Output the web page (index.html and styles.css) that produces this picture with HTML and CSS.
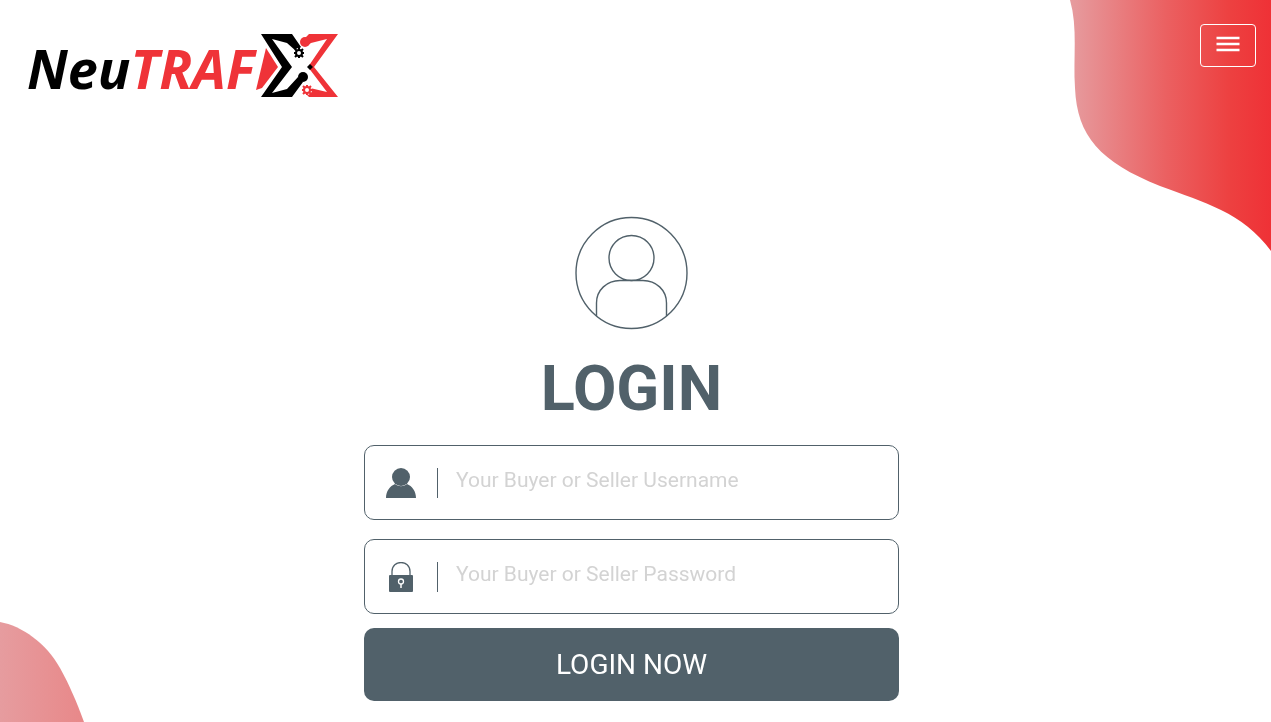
FILE: index.html
```
<!DOCTYPE html>
<html lang="en">
<head>
    <meta charset="UTF-8">
    <title>NeuTRAFIX - Login</title>
    <meta name="viewport" content="width=device-width, initial-scale=1.0">
    <link rel="stylesheet" href="styles.css">
</head>
<body>
    <!-- Background shapes -->
    <svg class="shape shape-top" width="201" height="251" viewBox="0 0 201 251" aria-hidden="true">
        <defs>
            <linearGradient id="redTop">
                <stop offset="0" stop-color="#e69c9f"/>
                <stop offset="0.48" stop-color="#eb6061"/>
                <stop offset="0.8" stop-color="#ed4040"/>
                <stop offset="1" stop-color="#ef3136"/>
            </linearGradient>
        </defs>
        <path fill="url(#redTop)" d="M0 0C8 28 3 58 5 88C7 136 30 162 90 186C135 203 172 212 201 251V0Z"/>
    </svg>
    <svg class="shape shape-bottom" width="85" height="101" viewBox="0 0 85 101" aria-hidden="true">
        <defs>
            <linearGradient id="redBottom">
                <stop offset="0" stop-color="#e69c9f"/>
                <stop offset="1" stop-color="#e88889"/>
            </linearGradient>
        </defs>
        <path fill="url(#redBottom)" d="M0 1C22 5 46 22 60 47C70 65 77 82 84 101H0Z"/>
    </svg>

    <!-- Header -->
    <header class="header">
        <a href="#" class="logo" aria-label="NeuTRAFIX">
            <svg width="312" height="64" viewBox="0 0 312 64">
                <text class="logo-text" x="0" y="55">Neu<tspan class="logo-red">TRAF</tspan></text>
                <path class="logo-red" d="M239 14L251 33L235 54L229 56Z"/>
                <path d="M234 0H265L274 13L269 17L260 9L245 5L265 33L245 59L260 55L271 43L276 48L265 63H234L255 33Z"/>
                <circle cx="276" cy="43" r="5"/>
                <path class="logo-red" d="M276 6L282 0H311L287 33L311 63H282L278 59L283 54L300 58L281 33L300 5L284 9L280 12Z"/>
                <circle class="logo-red" cx="278" cy="8" r="5"/>
                <path d="M283 30L286 33L283 36L280 33Z"/>
                <g class="gear">
                    <circle cx="272" cy="19" r="5" fill="#fff" stroke="none"/>
                    <circle cx="272" cy="19" r="3"/>
                    <path d="M272 14V16M272 22V24M267 19H269M275 19H277M268 15L270 17M274 21L276 23M268 23L270 21M274 17L276 15"/>
                </g>
                <g class="gear gear-red">
                    <circle cx="280" cy="56" r="5" fill="#fff" stroke="none"/>
                    <circle cx="280" cy="56" r="3"/>
                    <path d="M280 51V53M280 59V61M275 56H277M283 56H285M276 52L278 54M282 58L284 60M276 60L278 58M282 54L284 52"/>
                </g>
            </svg>
        </a>
        <button class="menu-btn" type="button" aria-label="Menu">
            <svg width="24" height="18" viewBox="0 0 24 18">
                <path d="M0.500 3H23.500M0.500 9H23.500M0.500 15H23.500" stroke="#fff" stroke-width="2.400"/>
            </svg>
        </button>
    </header>

    <!-- Login form -->
    <main class="login">
        <svg class="avatar" width="114" height="114" viewBox="0 0 114 114" aria-hidden="true">
            <circle cx="56.500" cy="57" r="55.500"/>
            <circle cx="56.500" cy="42" r="22.500"/>
            <path d="M21.500 100V87C21.500 74 32 64.500 45 64.500H68C81 64.500 91.500 74 91.500 87V100"/>
        </svg>
        <h1>LOGIN</h1>
        <form class="form">
            <div class="input-group">
                <label for="username" aria-label="Username">
                    <svg width="30" height="30" viewBox="0 0 30 30">
                        <path d="M0 30C0 23 4 18 9 16C13 19 17 19 21 16C26 18 30 23 30 30Z"/>
                        <circle cx="15" cy="9" r="9"/>
                    </svg>
                </label>
                <input type="text" id="username" placeholder="Your Buyer or Seller Username">
            </div>
            <div class="input-group">
                <label for="password" aria-label="Password">
                    <svg width="30" height="30" viewBox="0 0 30 30">
                        <path d="M6 14V9.500C6 -2.500 24 -2.500 24 9.500V14" fill="none" stroke="#51616a" stroke-width="1.300"/>
                        <rect x="3" y="13" width="24" height="17" rx="1"/>
                        <circle cx="15" cy="19.500" r="2.500" fill="none" stroke="#fff" stroke-width="1.300"/>
                        <path d="M15 22V26" stroke="#fff" stroke-width="1.500"/>
                    </svg>
                </label>
                <input type="password" id="password" placeholder="Your Buyer or Seller Password">
            </div>
            <button class="login-btn" type="submit">LOGIN NOW</button>
        </form>
    </main>
</body>
</html>
```
FILE: styles.css
```
* {
    box-sizing: border-box;
    margin: 0;
    padding: 0;
}

body {
    font-family: Roboto, "Liberation Sans", sans-serif;
    background-color: #fff;
    color: #51616a;
    min-height: 100vh;
}

svg {
    display: block;
}

/* Background shapes */
.shape {
    position: fixed;
    z-index: -1;
}

.shape-top {
    top: 0;
    right: 0;
}

.shape-bottom {
    bottom: 0;
    left: 0;
}

/* Header */
.header {
    display: flex;
    justify-content: space-between;
    align-items: flex-start;
    padding: 24px 15px 0 27px;
}

.logo {
    padding-top: 10px;
}

.logo svg {
    overflow: visible;
}

.logo-text {
    font-family: "Open Sans", "Noto Sans", sans-serif;
    font-size: 54px;
    font-weight: bold;
    font-style: italic;
}

.logo-red {
    fill: #ef3338;
}

.gear {
    fill: none;
    stroke: #000;
    stroke-width: 2;
}

.gear-red {
    stroke: #ef3338;
}

.menu-btn {
    display: flex;
    justify-content: center;
    width: 56px;
    height: 43px;
    padding-top: 10px;
    background: none;
    border: 1px solid #fff;
    border-radius: 4px;
    cursor: pointer;
}

/* Login */
.login {
    display: flex;
    flex-direction: column;
    align-items: center;
    padding: 118px 8px 20px 0;
}

.avatar {
    fill: none;
    stroke: #51616a;
    stroke-width: 1.4;
}

h1 {
    margin-top: 21px;
    font-size: 63px;
    line-height: 76px;
    font-weight: bold;
}

.form {
    width: 100%;
    max-width: 535px;
    margin-top: 18px;
}

.input-group {
    display: flex;
    align-items: center;
    height: 75px;
    margin-bottom: 19px;
    padding: 0 20px 0 21px;
    border: 1px solid #51616a;
    border-radius: 10px;
}

.input-group:nth-child(2) {
    margin-bottom: 14px;
}

.input-group label {
    padding-right: 21px;
    border-right: 1px solid #51616a;
    fill: #51616a;
}

input {
    flex: 1;
    min-width: 0;
    height: 30px;
    padding: 0 0 6px 18px;
    border: none;
    outline: none;
    background: none;
    color: #51616a;
    font-family: inherit;
    font-size: 21px;
}

input::placeholder {
    color: #d3d3d3;
}

.login-btn {
    display: block;
    width: 100%;
    height: 73px;
    border: none;
    border-radius: 10px;
    background-color: #51616a;
    color: #fff;
    font-family: inherit;
    font-size: 28px;
    cursor: pointer;
}
```
